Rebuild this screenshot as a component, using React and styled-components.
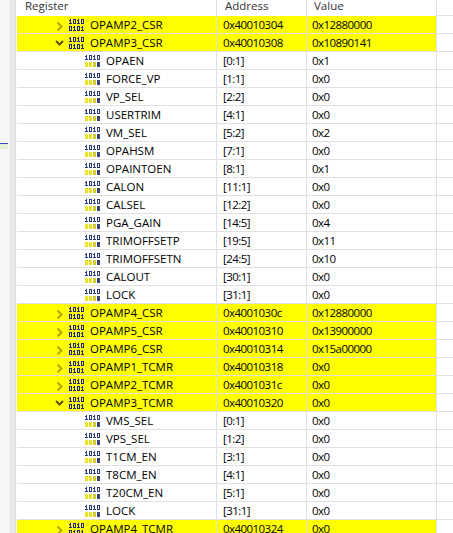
import styled, { createGlobalStyle } from "styled-components";

const GlobalStyle = createGlobalStyle`
  html, body {
    margin: 0;
    padding: 0;
    background: #fff;
  }
  body {
    font-family: "Open Sans", "Liberation Sans", sans-serif;
    font-size: 11.5px;
    color: #000;
  }
`;

//registers and their bit fields, in the order of the tree
const rows = [
  { name: "OPAMP2_CSR", addr: "0x40010304", value: "0x12880000" },
  { name: "OPAMP3_CSR", addr: "0x40010308", value: "0x10890141", open: true },
  { name: "OPAEN", addr: "[0:1]", value: "0x1", field: true },
  { name: "FORCE_VP", addr: "[1:1]", value: "0x0", field: true },
  { name: "VP_SEL", addr: "[2:2]", value: "0x0", field: true },
  { name: "USERTRIM", addr: "[4:1]", value: "0x0", field: true },
  { name: "VM_SEL", addr: "[5:2]", value: "0x2", field: true },
  { name: "OPAHSM", addr: "[7:1]", value: "0x0", field: true },
  { name: "OPAINTOEN", addr: "[8:1]", value: "0x1", field: true },
  { name: "CALON", addr: "[11:1]", value: "0x0", field: true },
  { name: "CALSEL", addr: "[12:2]", value: "0x0", field: true },
  { name: "PGA_GAIN", addr: "[14:5]", value: "0x4", field: true },
  { name: "TRIMOFFSETP", addr: "[19:5]", value: "0x11", field: true },
  { name: "TRIMOFFSETN", addr: "[24:5]", value: "0x10", field: true },
  { name: "CALOUT", addr: "[30:1]", value: "0x0", field: true },
  { name: "LOCK", addr: "[31:1]", value: "0x0", field: true },
  { name: "OPAMP4_CSR", addr: "0x4001030c", value: "0x12880000" },
  { name: "OPAMP5_CSR", addr: "0x40010310", value: "0x13900000" },
  { name: "OPAMP6_CSR", addr: "0x40010314", value: "0x15a00000" },
  { name: "OPAMP1_TCMR", addr: "0x40010318", value: "0x0" },
  { name: "OPAMP2_TCMR", addr: "0x4001031c", value: "0x0" },
  { name: "OPAMP3_TCMR", addr: "0x40010320", value: "0x0", open: true },
  { name: "VMS_SEL", addr: "[0:1]", value: "0x0", field: true },
  { name: "VPS_SEL", addr: "[1:2]", value: "0x0", field: true },
  { name: "T1CM_EN", addr: "[3:1]", value: "0x0", field: true },
  { name: "T8CM_EN", addr: "[4:1]", value: "0x0", field: true },
  { name: "T20CM_EN", addr: "[5:1]", value: "0x0", field: true },
  { name: "LOCK", addr: "[31:1]", value: "0x0", field: true },
  { name: "OPAMP4_TCMR", addr: "0x40010324", value: "0x0" },
];

//one digit of the 1010 / 0101 icon, 3px wide and 5px tall
const Bit = ({ x, y, on, color }) =>
  on ? (
    <path d={`M${x} ${y + 1}h1V${y}h1v4h1v1h-3v-1h1v-2h-1z`} fill={color} />
  ) : (
    <path
      d={`M${x} ${y}h3v5h-3z M${x + 1} ${y + 1}v3h1v-3z`}
      fill={color}
      fillRule="evenodd"
    />
  );

const RegisterIcon = () => (
  <Icon width="15" height="12" viewBox="0 0 15 12">
    {[1, 0, 1, 0].map((b, i) => (
      <Bit key={i} x={i * 4} y={0} on={b} color="#1a2a80" />
    ))}
    {[0, 1, 0, 1].map((b, i) => (
      <Bit key={i} x={i * 4} y={7} on={b} color="#1a2a80" />
    ))}
  </Icon>
);

const FieldIcon = () => (
  <Icon width="15" height="12" viewBox="0 0 15 12">
    {[1, 0, 1, 0].map((b, i) => (
      <Bit key={i} x={i * 4} y={0} on={b} color="#2b3a80" />
    ))}
    <rect x="0" y="7" width="3" height="5" fill="#ece22c" />
    <rect x="4" y="7" width="3" height="5" fill="#ece22c" />
    <rect x="8" y="7" width="3" height="5" fill="#d8cc30" />
    <rect x="12" y="7" width="3" height="5" fill="#3a4478" />
  </Icon>
);

const Chevron = ({ open }) => (
  <ChevronBox width="9" height="9" viewBox="0 0 9 9" $open={open}>
    {open ? (
      <path d="M1 2l3.5 3.5 3.5-3.5" fill="none" stroke="#5c5400" strokeWidth="2" />
    ) : (
      <path d="M2.5 .5l4 4-4 4" fill="none" stroke="#b3a600" strokeWidth="2" />
    )}
  </ChevronBox>
);

const App = () => {
  return (
    <Page>
      <GlobalStyle />
      <SidePanel>
        <ActiveMark />
      </SidePanel>
      <Gutter />
      <Tree>
        <Header>
          <NameHead>Register</NameHead>
          <AddrHead>Address</AddrHead>
          <ValueHead>Value</ValueHead>
          <Filler />
        </Header>
        {rows.map((row, i) => (
          <Row key={i}>
            <NameCell $field={row.field} $highlight={!row.field}>
              {!row.field && <Chevron open={row.open} />}
              {row.field ? <FieldIcon /> : <RegisterIcon />}
              <Label>{row.name}</Label>
            </NameCell>
            <AddrCell $highlight={!row.field}>{row.addr}</AddrCell>
            <ValueCell $highlight={!row.field}>{row.value}</ValueCell>
            <Filler />
          </Row>
        ))}
      </Tree>
    </Page>
  );
};

const Page = styled.div`
  display: flex;
  width: 453px;
  height: 533px;
  overflow: hidden;
  background: #fff;
`;

const SidePanel = styled.div`
  flex: 0 0 10px;
  padding-top: 143px;
  background: #f6f6f6;
`;

const ActiveMark = styled.div`
  width: 8px;
  height: 5px;
  border-top: 1px solid #3c46c8;
  background: #e6f2d8;
  box-sizing: content-box;
`;

const Gutter = styled.div`
  flex: 0 0 6px;
  background: #e9e9e9;
  border-right: 1px solid #dcdcdc;
  box-sizing: border-box;
`;

const Tree = styled.div`
  flex: 1;
  padding-left: 1px;
  min-width: 0;
`;

const Row = styled.div`
  display: grid;
  grid-template-columns: 200px 90px 130px 1fr;
  height: 18px;
`;

const Header = styled(Row)`
  height: 16px;
  color: #333;
  line-height: 11px;
`;

const Cell = styled.div`
  box-sizing: border-box;
  height: 18px;
  line-height: 17px;
  white-space: nowrap;
  overflow: hidden;
  border-right: 1px solid #e0e0e0;
  border-bottom: 1px solid #e0e0e0;
  background: ${(p) => (p.$highlight ? "#ffff00" : "#fff")};
`;

const NameCell = styled(Cell)`
  display: flex;
  align-items: center;
  padding-left: ${(p) => (p.$field ? "68px" : "38px")};
`;

const AddrCell = styled(Cell)`
  padding-left: 6px;
  letter-spacing: -0.55px;
`;

const ValueCell = styled(Cell)`
  padding-left: 5px;
  letter-spacing: -0.55px;
`;

const Filler = styled.div`
  border-bottom: 1px solid #e0e0e0;
`;

const NameHead = styled.div`
  padding-left: 8px;
  border-right: 1px solid #e0e0e0;
`;

const AddrHead = styled.div`
  padding-left: 8px;
  border-right: 1px solid #e0e0e0;
`;

const ValueHead = styled.div`
  padding-left: 7px;
  border-right: 1px solid #e0e0e0;
`;

const ChevronBox = styled.svg`
  flex: none;
  margin-right: 5px;
  margin-top: ${(p) => (p.$open ? "2px" : "3px")};
`;

const Icon = styled.svg`
  flex: none;
  display: block;
`;

const Label = styled.span`
  margin-left: 6px;
`;

export default App;
